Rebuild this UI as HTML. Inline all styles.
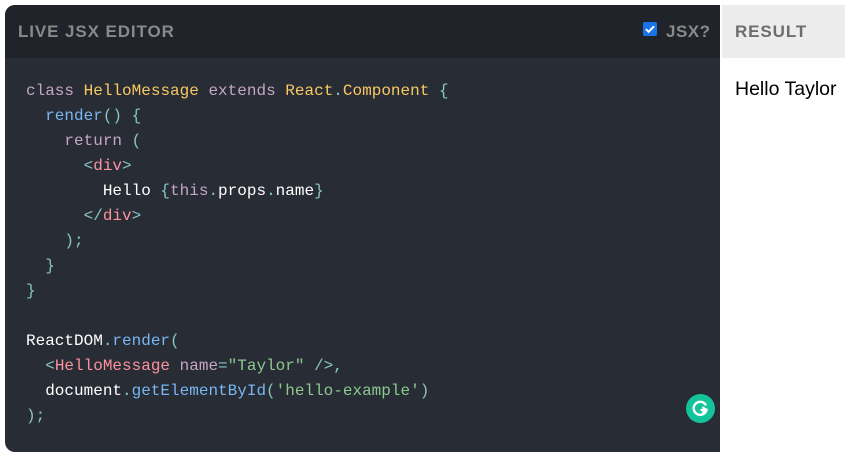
<!DOCTYPE html>
<html><head><style>
body{margin:0;width:845px;height:462px;background:#fff;position:relative;overflow:hidden;font-family:"Liberation Sans",sans-serif}
.ed{position:absolute;left:5px;top:5px;width:715px;height:447px;background:#282c34;border-radius:10px 0 0 10px;overflow:hidden}
.eh{height:53px;background:#20232a;position:relative}
.t{position:absolute;top:17px;font-weight:bold;font-size:17px;letter-spacing:0.9px;color:#8a8a8a}
.rs{position:absolute;left:722px;top:5px;width:123px;height:447px;background:#fff}
.rh{height:53px;background:#ececec;position:relative}
pre{position:absolute;left:21px;top:74px;margin:0;font-family:"Liberation Mono",monospace;font-size:16px;line-height:25px;color:#fff}
.k{color:#c5a5c5}.y{color:#fac863}.b{color:#79b6f2}.p{color:#88c6be}.r{color:#fc929e}.g{color:#8dc891}
.cb{position:absolute;left:638px;top:17px;width:14px;height:14px;background:#1a73e8;border-radius:2px}
.gr{position:absolute;width:29px;height:29px;border-radius:50%;background:#15c39a}
</style></head><body>
<div class="ed">
<div class="eh"><div class="t" style="left:13px">LIVE JSX EDITOR</div>
<div class="cb"><svg width="14" height="14" viewBox="0 0 14 14"><path d="M3 7.2l2.6 2.6L11 4.3" stroke="#fff" stroke-width="2" fill="none"/></svg></div>
<div class="t" style="left:661px;letter-spacing:0.5px">JSX?</div></div>
<pre><span class="k">class</span> <span class="y">HelloMessage</span> <span class="k">extends</span> <span class="y">React</span><span class="p">.</span><span class="y">Component</span> <span class="p">{</span>
  <span class="b">render</span><span class="p">() {</span>
    <span class="k">return</span> <span class="p">(</span>
      <span class="p">&lt;</span><span class="r">div</span><span class="p">&gt;</span>
        Hello <span class="p">{</span><span class="k">this</span><span class="p">.</span>props<span class="p">.</span>name<span class="p">}</span>
      <span class="p">&lt;/</span><span class="r">div</span><span class="p">&gt;</span>
    <span class="p">);</span>
  <span class="p">}</span>
<span class="p">}</span>

ReactDOM<span class="p">.</span><span class="b">render</span><span class="p">(</span>
  <span class="p">&lt;</span><span class="r">HelloMessage</span> <span class="k">name</span><span class="p">=</span><span class="g">"Taylor"</span> <span class="p">/&gt;,</span>
  document<span class="p">.</span><span class="b">getElementById</span><span class="p">(</span><span class="g">'hello-example'</span><span class="p">)</span>
<span class="p">);</span></pre>
<div class="gr" style="left:681px;top:389px"><svg width="29" height="29" viewBox="0 0 29 29"><path d="M19.5 10.5A6.5 6.5 0 1 0 20.5 16h-5" stroke="#fff" stroke-width="2.4" fill="none" stroke-linecap="round"/><path d="M17 13.5l3.5 2.5-3.5 2.5" stroke="#fff" stroke-width="2" fill="none" stroke-linecap="round" stroke-linejoin="round"/></svg></div>
</div>
<div class="rs"><div class="rh"><div class="t" style="left:13px;color:#6d6d6d">RESULT</div></div>
<div style="position:absolute;left:13px;top:73px;font-size:19.5px;color:#000">Hello Taylor</div></div>
</body></html>
